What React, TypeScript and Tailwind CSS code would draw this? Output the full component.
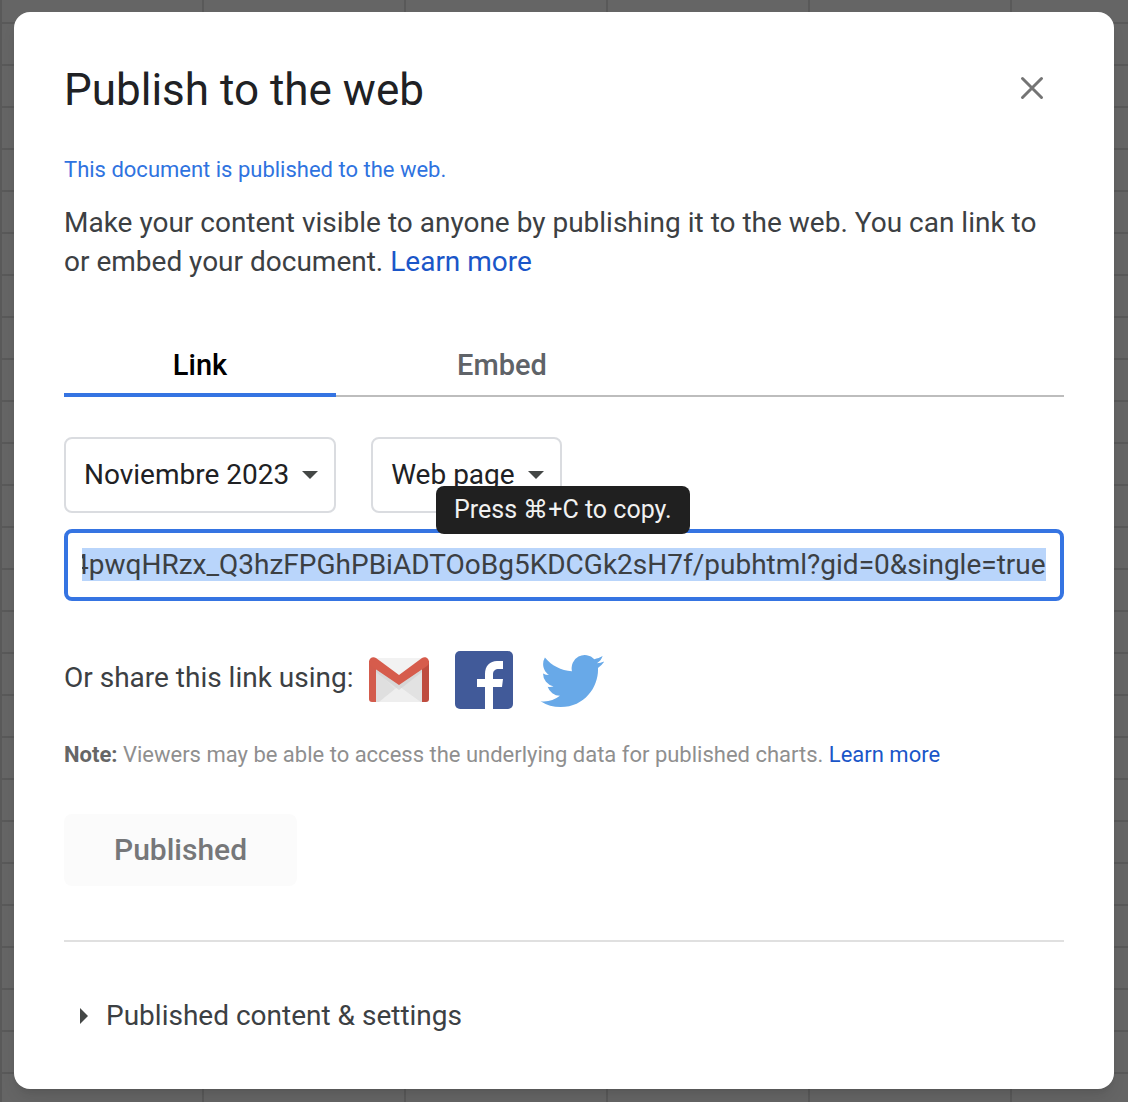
import React, { useEffect, useRef, useState } from "react";

const SHEETS = ["Noviembre 2023", "Entire Document"];
const FORMATS = ["Web page", "PDF document"];
const PUBLISHED_LINK =
  "4pwqHRzx_Q3hzFPGhPBiADTOoBg5KDCGk2sH7f/pubhtml?gid=0&single=true";

const CloseIcon = () => (
  <svg width="24" height="24" viewBox="0 0 24 24" aria-hidden="true">
    <path
      d="M2.5 2.5l19 19M21.5 2.5l-19 19"
      fill="none"
      stroke="#747474"
      strokeWidth="3"
      strokeLinecap="round"
    />
  </svg>
);

const GmailIcon = () => (
  <svg width="64" height="64" viewBox="1 0 64 64" aria-hidden="true">
    <rect x="3" y="10" width="58" height="44" rx="3" fill="#e4e4e4" />
    <path d="M6 10h52L32 29z" fill="#f2f2f2" />
    <path d="M9 22 28 41 12 54H9z" fill="#dfdfdf" />
    <path d="M12 54 28 41l4-3 22 16z" fill="#eeeeee" />
    <path d="M55 22v32h-1L32 38z" fill="#e2e2e2" />
    <path d="M9 19 32 36l23-17v5L32 42 9 24z" fill="#cfcfcf" opacity=".6" />
    <path d="M2 13h7v41H5a3 3 0 0 1-3-3z" fill="#d35c4d" />
    <path d="M55 13h7v38a3 3 0 0 1-3 3h-4z" fill="#bf4c3f" />
    <path
      d="M2 14c0-4 4-6 7-4l23 17 23-17c3-2 7 0 7 4 0 2-1 3-2 4L32 37 4 18c-1-1-2-2-2-4z"
      fill="#d65c4c"
    />
  </svg>
);

const FacebookIcon = () => (
  <svg width="64" height="64" viewBox="2 0 64 64" aria-hidden="true">
    <rect x="3" y="3" width="58" height="58" rx="5" fill="#415a99" />
    <path
      d="M33 61V39h-8v-8h8v-5c0-8 5-13 12-13h6v8h-4c-4 0-6 2-6 5v5h10l-1 8h-9v22z"
      fill="#fff"
    />
  </svg>
);

const TwitterIcon = () => (
  <svg width="64" height="64" viewBox="0 0 24 24" aria-hidden="true">
    <path
      d="M23.95 4.57a10 10 0 0 1-2.82.77 4.96 4.96 0 0 0 2.16-2.72c-.95.55-2 .95-3.12 1.19a4.92 4.92 0 0 0-8.39 4.48C7.69 8.1 4.07 6.13 1.64 3.16a4.82 4.82 0 0 0-.67 2.48c0 1.71.87 3.21 2.19 4.1a4.9 4.9 0 0 1-2.23-.62v.06a4.92 4.92 0 0 0 3.95 4.83 5 5 0 0 1-2.21.08 4.94 4.94 0 0 0 4.6 3.42A9.87 9.87 0 0 1 0 19.54a13.99 13.99 0 0 0 7.56 2.21c9.05 0 14-7.5 14-13.98 0-.21 0-.42-.02-.63a9.94 9.94 0 0 0 2.46-2.55z"
      transform="translate(.2 .4)"
      fill="#68a9e8"
    />
  </svg>
);

const Dropdown: React.FC<{ label: string; options: string[] }> = ({
  label,
  options,
}) => {
  const [value, setValue] = useState(options[0]);
  return (
    <div className="grid items-center">
      <select
        aria-label={label}
        value={value}
        onChange={(e) => setValue(e.target.value)}
        className="field-sizing-content col-start-1 row-start-1 h-[76px] appearance-none rounded-lg border-2 border-[#dadce0] bg-white pr-[45px] pb-0.5 pl-[18px] text-[28px] text-[#202124]"
      >
        {options.map((option) => (
          <option key={option}>{option}</option>
        ))}
      </select>
      <svg
        width="16"
        height="8"
        viewBox="0 0 16 8"
        aria-hidden="true"
        className="pointer-events-none col-start-1 row-start-1 mr-[18px] justify-self-end"
      >
        <path d="M0 0h16L8 8z" fill="#444746" />
      </svg>
    </div>
  );
};

const TABS = ["Link", "Embed"];

const Tabs = () => {
  const [active, setActive] = useState("Link");
  return (
    <div
      role="tablist"
      className="mt-14 flex gap-[30px] border-b-2 border-[#bdbdbd]"
    >
      {TABS.map((tab) => (
        <button
          key={tab}
          role="tab"
          aria-selected={tab === active}
          onClick={() => setActive(tab)}
          className={`-mb-0.5 h-[60px] w-[272px] border-b-4 text-[29px] font-medium ${
            tab === active
              ? "border-[#3574e2] text-black"
              : "border-transparent text-[#5f6368]"
          }`}
        >
          {tab}
        </button>
      ))}
    </div>
  );
};

const LinkField = () => {
  const inputRef = useRef<HTMLInputElement>(null);

  // Select the whole link and keep its end in view
  useEffect(() => {
    const input = inputRef.current;
    if (!input) return;
    input.focus();
    input.select();
    input.scrollLeft = input.scrollWidth;
  }, []);

  return (
    <div className="relative mt-4">
      <input
        ref={inputRef}
        readOnly
        aria-label="Published link"
        value={PUBLISHED_LINK}
        className="block h-[72px] w-full rounded-lg border-4 border-[#3574e2] px-3.5 pb-0.5 text-[28px] text-[#3c4043] outline-none selection:bg-[#b9d5fb] selection:text-[#3c4043]"
      />
      <div
        role="tooltip"
        className="absolute -top-[43px] left-[372px] rounded-lg bg-[#202020] px-[18px] text-[25px] leading-[48px] whitespace-nowrap text-[#f1f1f1]"
      >
        Press ⌘+C to copy.
      </div>
    </div>
  );
};

const App = () => (
  <div className="min-h-screen bg-[#656565] bg-[linear-gradient(to_right,#595959_2px,transparent_2px),linear-gradient(to_bottom,#595959_2px,transparent_2px)] bg-[size:202px_42px] bg-[position:0_22px] px-3.5 pt-3 pb-[13px] font-['Roboto',sans-serif]">
    <div
      role="dialog"
      aria-labelledby="dialog-title"
      className="rounded-2xl bg-white px-[50px] pt-[50px] pb-[54px] text-[28px] leading-[39px] text-[#3c4043] shadow-lg"
    >
      <div className="flex items-center justify-between">
        <h1
          id="dialog-title"
          className="text-[44px] leading-14 text-[#202124]"
        >
          Publish to the web
        </h1>
        <button aria-label="Close" className="mr-5 mb-1">
          <CloseIcon />
        </button>
      </div>

      <p className="mt-9 text-[22px] leading-8 text-[#2f73e0]">
        This document is published to the web.
      </p>
      <p className="mt-[17px]">
        Make your content visible to anyone by publishing it to the web. You can
        link to or embed your document.{" "}
        <a href="#learn" className="text-[#1a56c8]">
          Learn more
        </a>
      </p>

      <Tabs />

      <div className="mt-10 flex gap-[35px]">
        <Dropdown label="Content" options={SHEETS} />
        <Dropdown label="Format" options={FORMATS} />
      </div>
      <LinkField />

      <div className="mt-[47px] flex gap-[22px]">
        <span className="-mr-2 leading-[60px]">Or share this link using:</span>
        <a href="#gmail" aria-label="Gmail">
          <GmailIcon />
        </a>
        <a href="#facebook" aria-label="Facebook">
          <FacebookIcon />
        </a>
        <a href="#twitter" aria-label="Twitter">
          <TwitterIcon />
        </a>
      </div>

      <p className="mt-[27px] text-[22px] leading-8 text-[#8f8f8f]">
        <b className="text-[#666666]">Note:</b> Viewers may be able to access
        the underlying data for published charts.{" "}
        <a href="#note" className="text-[#1a56c8]">
          Learn more
        </a>
      </p>

      <button
        disabled
        className="mt-[43px] block h-[72px] rounded-lg bg-[#fbfbfb] px-[50px] pb-0.5 text-[30px] font-medium text-[#767779]"
      >
        Published
      </button>

      <hr className="mt-[54px] border-t-2 border-[#e0e0e0]" />

      <button className="mt-[54px] ml-4 flex items-center gap-[18px]">
        <svg width="8" height="16" viewBox="0 0 8 16" aria-hidden="true">
          <path d="M0 0v16l8-8z" fill="#444746" />
        </svg>
        Published content &amp; settings
      </button>
    </div>
  </div>
);

export default App;
